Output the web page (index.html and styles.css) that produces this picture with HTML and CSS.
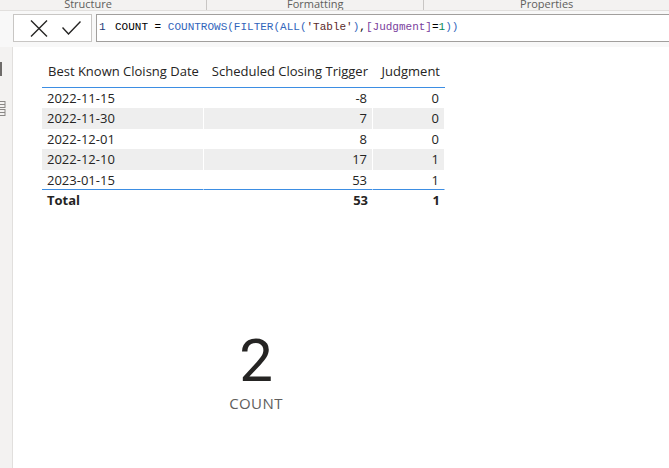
FILE: index.html
```html
<!DOCTYPE html>
<html>
<head>
<meta charset="utf-8">
<link rel="stylesheet" href="styles.css">
</head>
<body>
<div class="ribbon">
  <div class="tab tab-structure">Structure</div>
  <div class="tab tab-formatting">Formatting</div>
  <div class="tab tab-properties">Properties</div>
</div>
<div class="formula-row">
  <div class="fx-buttons">
    <svg class="ico-x" width="18" height="17" viewBox="0 0 18 17"><path d="M1 0.5 L17 16.5 M17 0.5 L1 16.5" stroke="#252423" stroke-width="1.4" fill="none"/></svg>
    <svg class="ico-check" width="19" height="14" viewBox="0 0 19 14"><path d="M0.5 6.5 L6.5 13 L18.5 0.5" stroke="#252423" stroke-width="1.4" fill="none"/></svg>
  </div>
  <div class="fx-input">
    <span class="ln">1</span><code class="dax"><span class="k-measure">COUNT</span> = <span class="k-fn">COUNTROWS</span><span class="k-p1">(</span><span class="k-fn">FILTER</span><span class="k-p2">(</span><span class="k-fn">ALL</span><span class="k-p3">(</span><span class="k-str">'Table'</span><span class="k-p3">)</span>,<span class="k-col">[Judgment]</span>=<span class="k-num">1</span><span class="k-p2">)</span><span class="k-p1">)</span></code>
  </div>
</div>
<div class="body">
  <aside class="rail">
    <div class="rail-bar"></div>
    <svg class="rail-icon" width="6" height="16" viewBox="0 0 6 16"><rect x="-1" y="0.5" width="6" height="6" fill="none" stroke="#8a8886"/><line x1="0" y1="3.5" x2="5" y2="3.5" stroke="#8a8886"/><rect x="-1" y="8.5" width="6" height="6" fill="none" stroke="#8a8886"/><line x1="0" y1="11.5" x2="5" y2="11.5" stroke="#8a8886"/></svg>
  </aside>
  <main class="canvas">
    <div class="table">
      <div class="hcell">Best Known Cloisng Date</div>
      <div class="hcell num">Scheduled Closing Trigger</div>
      <div class="hcell num">Judgment</div>

      <div class="cell">2022-11-15</div><div class="cell num">-8</div><div class="cell num">0</div>
      <div class="cell alt">2022-11-30</div><div class="cell num alt">7</div><div class="cell num alt">0</div>
      <div class="cell">2022-12-01</div><div class="cell num">8</div><div class="cell num">0</div>
      <div class="cell alt">2022-12-10</div><div class="cell num alt">17</div><div class="cell num alt">1</div>
      <div class="cell last">2023-01-15</div><div class="cell num last">53</div><div class="cell num last">1</div>

      <div class="tcell">Total</div><div class="tcell num">53</div><div class="tcell num">1</div>
    </div>
    <div class="card">
      <div class="card-value">2</div>
      <div class="card-label">COUNT</div>
    </div>
  </main>
</div>
</body>
</html>
```

FILE: styles.css
```css
* { box-sizing: border-box; }
html, body {
  margin: 0;
  padding: 0;
  width: 669px;
  height: 468px;
  overflow: hidden;
  background: #ffffff;
  font-family: "Open Sans", "Noto Sans", sans-serif;
  color: #252423;
}

.ribbon {
  display: flex;
  height: 11px;
  background: #f3f2f1;
  border-bottom: 1px solid #e1dfdd;
  overflow: hidden;
}
.tab {
  font-size: 11px;
  line-height: 8px;
  color: #605e5c;
  text-align: center;
  height: 10px;
}
.tab-structure { width: 211px; padding-right: 30px; border-right: 1px solid #c8c6c4; }
.tab-formatting { width: 222px; border-right: 1px solid #c8c6c4; }
.tab-properties { width: 250px; }

.formula-row {
  display: flex;
  height: 36px;
  padding-top: 3px;
  background: #f8f8f8;
  gap: 4px;
}
.fx-buttons {
  margin-left: 13px;
  width: 79px;
  height: 28px;
  background: #ffffff;
  border: 1px solid #c8c6c4;
  display: flex;
  align-items: flex-start;
}
.ico-x { margin-left: 16px; margin-top: 5px; }
.ico-check { margin-left: 14px; margin-top: 6px; }

.fx-input {
  flex: 1;
  margin-right: -2px;
  height: 28px;
  background: #ffffff;
  border: 1px solid #a19f9d;
  display: flex;
  align-items: flex-start;
  padding-top: 4px;
  font-family: "Liberation Mono", monospace;
  font-size: 11px;
  line-height: 16px;
  color: #000000;
}
.ln { width: 18px; padding-left: 2px; color: #1e3a78; }
.dax { font-family: "Liberation Mono", monospace; white-space: pre; }
.k-fn { color: #3165bb; }
.k-p1 { color: #3165bb; }
.k-p2 { color: #3165bb; }
.k-p3 { color: #3165bb; }
.k-str { color: #5a2a2a; }
.k-col { color: #7a3e9d; }
.k-num { color: #098658; }

.body {
  display: flex;
  height: 421px;
}
.rail {
  width: 13px;
  background: #f3f2f1;
  border-right: 1px solid #e1dfdd;
  padding-top: 15px;
}
.rail-bar {
  width: 2px;
  height: 14px;
  background: #6e6c6a;
}
.rail-icon { display: block; margin-top: 25px; }

.canvas {
  flex: 1;
  background: #ffffff;
  padding-top: 12px;
  padding-left: 29px;
}

.table {
  display: grid;
  grid-template-columns: 162px 169px 72px;
  width: 403px;
  font-size: 13px;
  color: #252423;
}
.hcell {
  padding: 3px 5px 7px 6px;
  line-height: 18px;
  white-space: nowrap;
  border-bottom: 1px solid #3d8ee3;
}
.hcell.num { text-align: right; padding-left: 0; }
.cell {
  height: 20.4px;
  line-height: 20.4px;
  padding: 0 5px;
  white-space: nowrap;
  border-right: 1px solid #ffffff;
}
.cell.num { text-align: right; }
.cell.alt { background: #eeeeee; }
.cell.last { border-bottom: 1px solid #3d8ee3; }
.tcell {
  height: 21px;
  line-height: 21px;
  padding: 0 5px;
  font-weight: 700;
}
.tcell.num { text-align: right; }

.card {
  margin-top: 120px;
  margin-left: 158px;
  width: 112px;
  text-align: center;
}
.card-value {
  font-family: Roboto, "Open Sans", sans-serif;
  font-size: 60px;
  line-height: 60px;
  color: #252423;
}
.card-label {
  margin-top: 4px;
  font-size: 15px;
  line-height: 16px;
  letter-spacing: 0.4px;
  color: #605e5c;
}
```
